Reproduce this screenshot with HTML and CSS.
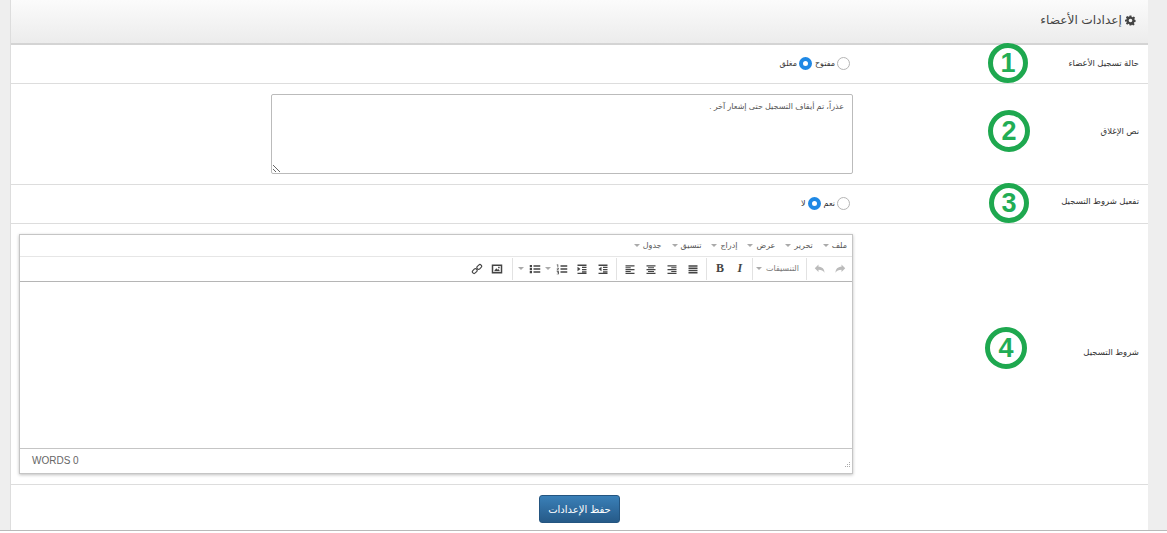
FILE: index.html
```html
<!DOCTYPE html>
<html lang="ar" dir="rtl">
<head>
<meta charset="utf-8">
<title>إعدادات الأعضاء</title>
<link rel="stylesheet" href="styles.css">
</head>
<body>
<div class="shell">
<main class="panel">
  <header class="panel-head">
    <svg class="gear" viewBox="0 0 24 24"><path fill-rule="evenodd" d="M10 1h4l.6 3.2 1.9.8 2.7-1.8 2.8 2.8-1.8 2.7.8 1.9L23 11v4l-2.9.6-.8 1.9 1.8 2.7-2.8 2.8-2.7-1.8-1.9.8L14 23h-4l-.6-2.9-1.9-.8-2.7 1.8-2.8-2.8 1.8-2.7-.8-1.9L0 14.500v-4l3-.5.8-1.900L2 5l2.800-2.800 2.700 1.800 1.900-.8zM12 8a4 4 0 1 0 0 8 4 4 0 0 0 0-8z"/></svg>
    <h1 class="title">إعدادات الأعضاء</h1>
  </header>

  <section class="row row-one">
    <div class="label-cell">
      <span class="label">حالة تسجيل الأعضاء</span>
      <span class="badge badge-one">1</span>
    </div>
    <div class="control radios">
      <label class="radio"><input type="radio" name="status"><span>مفتوح</span></label>
      <label class="radio"><input type="radio" name="status" checked><span>مغلق</span></label>
    </div>
  </section>

  <section class="row row-two">
    <div class="label-cell">
      <span class="label">نص الإغلاق</span>
      <span class="badge badge-two">2</span>
    </div>
    <div class="control">
      <textarea class="closing-text">عذراً، تم أيقاف التسجيل حتى إشعار آخر .</textarea>
    </div>
  </section>

  <section class="row row-three">
    <div class="label-cell">
      <span class="label">تفعيل شروط التسجيل</span>
      <span class="badge badge-three">3</span>
    </div>
    <div class="control radios">
      <label class="radio"><input type="radio" name="terms"><span>نعم</span></label>
      <label class="radio"><input type="radio" name="terms" checked><span>لا</span></label>
    </div>
  </section>

  <section class="row row-four">
    <div class="label-cell">
      <span class="label">شروط التسجيل</span>
      <span class="badge badge-four">4</span>
    </div>
    <div class="control">
      <div class="editor">
        <nav class="menubar">
          <span class="menu">ملف<i class="caret"></i></span>
          <span class="menu">تحرير<i class="caret"></i></span>
          <span class="menu">عرض<i class="caret"></i></span>
          <span class="menu">إدراج<i class="caret"></i></span>
          <span class="menu">تنسيق<i class="caret"></i></span>
          <span class="menu">جدول<i class="caret"></i></span>
        </nav>
        <div class="toolbar">
          <div class="group">
            <span class="tool faded"><svg viewBox="0 0 16 16"><path d="M10 2l5 5-5 5V9c-4 0-6 1-8 4 0-5 3-8 8-8z"/></svg></span>
            <span class="tool faded"><svg viewBox="0 0 16 16"><path d="M6 2 1 7l5 5V9c4 0 6 1 8 4 0-5-3-8-8-8z"/></svg></span>
          </div>
          <div class="group">
            <span class="format">التنسيقات<i class="caret"></i></span>
          </div>
          <div class="group">
            <span class="tool glyph italic">I</span>
            <span class="tool glyph">B</span>
          </div>
          <div class="group wide">
            <span class="tool"><svg viewBox="0 0 16 16"><path d="M2 3h12v2H2zM2 6h12v2H2zM2 9h12v2H2zM2 12h12v2H2z"/></svg></span>
            <span class="tool"><svg viewBox="0 0 16 16"><path d="M2 3h12v1.500H2zM7 5.500h7V7H7zM2 8h12v1.500H2zM7 10.500h7V12H7zM2 13h12v1.500H2z"/></svg></span>
            <span class="tool"><svg viewBox="0 0 16 16"><path d="M2 3h12v1.500H2zM4 5.500h8V7H4zM2 8h12v1.500H2zM4 10.500h8V12H4zM2 13h12v1.500H2z"/></svg></span>
            <span class="tool"><svg viewBox="0 0 16 16"><path d="M2 3h12v1.500H2zM2 5.500h7V7H2zM2 8h12v1.500H2zM2 10.500h7V12H2zM2 13h12v1.500H2z"/></svg></span>
          </div>
          <div class="group wide lists">
            <span class="tool"><svg viewBox="0 0 16 16"><path d="M2 2h12v2H2zM8 5h6v1.500H8zM8 8h6v1.500H8zM8 11h6v1.500H8zM2 13h12v1.500H2zM6 5v6L2 8z"/></svg></span>
            <span class="tool"><svg viewBox="0 0 16 16"><path d="M2 2h12v2H2zM8 5h6v1.500H8zM8 8h6v1.500H8zM8 11h6v1.500H8zM2 13h12v1.500H2zM2 5v6l4-3z"/></svg></span>
            <span class="tool list"><svg viewBox="0 0 16 16"><path d="M6 3h9v2H6zM6 7h9v2H6zM6 11h9v2H6zM1 2h2v4H2V3H1zM1 7h3v1L2 9.500h2V10H1V9l2-1.500H1zM1 11h3v4H1v-.7h2v-.9H1.500v-.6H3v-.9H1z"/></svg><i class="caret"></i></span>
            <span class="tool list"><svg viewBox="0 0 16 16"><path d="M6 3h9v2H6zM6 7h9v2H6zM6 11h9v2H6zM1 2.500h3v3H1zM1 6.500h3v3H1zM1 10.500h3v3H1z"/></svg><i class="caret"></i></span>
          </div>
          <div class="group last">
            <span class="tool"><svg viewBox="0 0 16 16"><path fill-rule="evenodd" d="M1 2h14v12H1zM3 4v8h10V4zM4 11l3-4 2 2 1-1 2 3zM9.500 5h2v2h-2z"/></svg></span>
            <span class="tool"><svg viewBox="0 0 16 16" class="link-icon"><g fill="none" stroke="currentColor" stroke-width="1.500"><rect x="1.500" y="8.500" width="7" height="4.500" rx="2.200" transform="rotate(-45 5 10.750)"/><rect x="7.500" y="3" width="7" height="4.500" rx="2.200" transform="rotate(-45 11 5.250)"/></g></svg></span>
          </div>
        </div>
        <div class="edit-area"></div>
        <footer class="statusbar">
          <svg class="grip" viewBox="0 0 8 8"><path d="M6 1h1v1H6zM4 3h1v1H4zM6 3h1v1H6zM2 5h1v1H2zM4 5h1v1H4zM6 5h1v1H6z"/></svg>
          <span class="words" dir="ltr">WORDS 0</span>
        </footer>
      </div>
    </div>
  </section>

  <footer class="actions">
    <button class="save" type="button">حفظ الإعدادات</button>
  </footer>
</main>
</div>
</body>
</html>
```
FILE: styles.css
```css
* { box-sizing: border-box; }
html, body { margin: 0; padding: 0; background: #fff; }
body {
  font-family: "Liberation Sans", "DejaVu Sans", sans-serif;
  font-size: 10px;
  color: #333;
  overflow: hidden;
}
.shell {
  height: 531px;
  background: #eee;
  padding-left: 10px;
  padding-right: 19px;
  border-bottom: 1px solid #b9b9b9;
}
.panel {
  height: 530px;
  background: #fff;
  border-left: 1px solid #ddd;
  display: flex;
  flex-direction: column;
}
.panel-head {
  height: 45px;
  flex: none;
  display: flex;
  align-items: center;
  gap: 3px;
  padding-right: 12px;
  padding-bottom: 3px;
  background: linear-gradient(#fbfbfb, #ececec);
  border-bottom: 2px solid #d4d4d4;
}
.gear { width: 11px; height: 11px; fill: #444; }
.title { margin: 0; font-size: 12.2px; font-weight: 400; color: #444; }

.row {
  display: flex;
  align-items: center;
  border-bottom: 1px solid #ddd;
  flex: none;
}
.row-one { height: 39px; }
.row-two { height: 101px; }
.row-three { height: 39px; }
.row-four { height: 261px; }
.label-cell {
  width: 295px;
  flex: none;
  position: relative;
  align-self: stretch;
  display: flex;
  align-items: center;
  padding-right: 9px;
}
.label { font-size: 8.5px; color: #333; }
.row-one .label { margin-bottom: 3px; }
.row-two .label { margin-bottom: 6px; }
.row-three .label { margin-bottom: 6px; }
.row-four .label { margin-bottom: 5px; }
.badge {
  position: absolute;
  width: 40px;
  height: 40px;
  border: 5px solid #1ea84f;
  border-radius: 50%;
  display: flex;
  align-items: center;
  justify-content: center;
  font-size: 27px;
  font-weight: 700;
  color: #22ad55;
}
.badge-one { right: 120px; top: -2px; }
.badge-two { right: 118px; top: 26px; width: 42px; height: 42px; }
.badge-three { right: 119px; top: -2px; }
.badge-four { right: 121px; top: 103px; width: 42px; height: 42px; }

.control { flex: 1; min-width: 0; }
.radios { display: flex; gap: 3px; padding-right: 3px; padding-bottom: 1px; }
.radio { display: flex; align-items: center; gap: 2px; font-size: 8px; color: #333; }
.radio input {
  appearance: none;
  margin: 0;
  width: 13px;
  height: 13px;
  border: 1px solid #b5b5b5;
  border-radius: 50%;
  background: #fff;
}
.radio input:checked {
  border: 4px solid #1e88e5;
  background: #fff;
}
.closing-text {
  display: block;
  width: 582px;
  height: 80px;
  padding: 7px 8px;
  border: 1px solid #bbb;
  border-radius: 2px;
  font: 8px "Liberation Sans", "DejaVu Sans", sans-serif;
  color: #555;
  resize: both;
  outline: none;
}
.editor {
  width: 834px;
  height: 240px;
  margin-bottom: 1px;
  display: flex;
  flex-direction: column;
  border: 1px solid #c5c5c5;
  box-shadow: 0 1px 3px rgba(0,0,0,.25);
  background: #fff;
}
.menubar {
  height: 22px;
  flex: none;
  display: flex;
  align-items: center;
  padding-right: 5px;
  font-size: 8px;
  color: #555;
  border-bottom: 1px solid #e6e6e6;
}
.menu { display: flex; align-items: center; gap: 3px; padding-left: 10px; }
.caret {
  display: inline-block;
  width: 0;
  height: 0;
  border-top: 3px solid #aaa;
  border-left: 3px solid transparent;
  border-right: 3px solid transparent;
}
.toolbar {
  height: 25px;
  flex: none;
  display: flex;
  align-items: center;
  border-bottom: 1px solid #b5b5b5;
}
.group {
  display: flex;
  align-items: center;
  height: 22px;
  padding: 0 2px 0 3px;
  border-left: 1px solid #e2e2e2;
}
.group.lists { padding-left: 5px; }
.group.last { border-left: 0; padding-right: 5px; }
.tool {
  width: 20px;
  height: 20px;
  flex: none;
  display: flex;
  align-items: center;
  justify-content: center;
  color: #444;
}
.wide .tool { width: 21px; }
.tool svg { width: 12px; height: 12px; fill: currentColor; }
.tool .link-icon { fill: none; }
.tool.faded { color: #bbb; }
.wide .tool.list { width: auto; gap: 5px; padding: 0 2px 0 0; }
.tool.list svg { margin-right: 2px; }
.glyph { font-size: 12px; font-weight: 700; font-family: "Liberation Serif", serif; color: #444; }
.italic { font-style: italic; }
.format { display: flex; align-items: center; gap: 4px; font-size: 8px; color: #777; padding: 0 5px 0 0; }
.edit-area { flex: 1; min-height: 0; }
.statusbar {
  height: 25px;
  flex: none;
  display: flex;
  align-items: center;
  justify-content: space-between;
  padding: 0 1px 0 12px;
  border-top: 1px solid #c5c5c5;
  font-size: 10px;
  color: #666;
}
.grip { width: 8px; height: 8px; fill: #aaa; margin-top: 9px; }
.actions {
  flex: 1;
  display: flex;
  align-items: flex-start;
  justify-content: center;
  padding-top: 10px;
}
.save {
  width: 81px;
  height: 28px;
  padding: 0;
  border: 1px solid #245580;
  border-radius: 3px;
  background: linear-gradient(#3a80b8, #265a88);
  color: #fff;
  font: 10px "Liberation Sans", "DejaVu Sans", sans-serif;
}
```
